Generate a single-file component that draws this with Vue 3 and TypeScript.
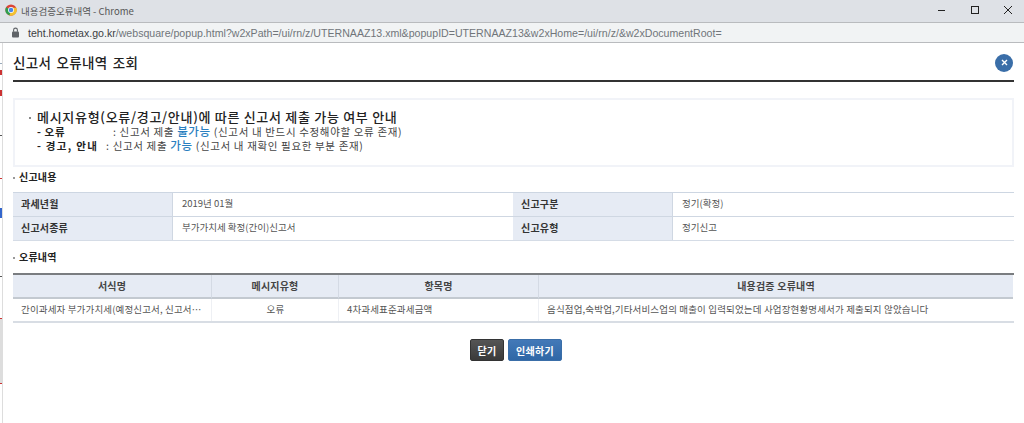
<script setup lang="ts">
const infoRows = [
  [
    { label: '과세년월', value: '2019년 01월' },
    { label: '신고구분', value: '정기(확정)' },
  ],
  [
    { label: '신고서종류', value: '부가가치세 확정(간이)신고서' },
    { label: '신고유형', value: '정기신고' },
  ],
]
const headers = ['서식명', '메시지유형', '항목명', '내용검증 오류내역']
</script>

<template>
  <div class="window">
    <header class="titlebar">
      <svg class="chrome" width="12" height="12" viewBox="0 0 16 16">
        <circle cx="8" cy="8" r="7.5" fill="#db4437" />
        <path d="M8 8 L1.5 4.2 A7.5 7.5 0 0 0 6.2 15.3 Z" fill="#2f9e4f" />
        <path d="M8 8 L6 15.4 A7.5 7.5 0 0 0 15 5 L8 5 Z" fill="#f2c230" />
        <circle cx="8" cy="8" r="3.9" fill="#fff" />
        <circle cx="8" cy="8" r="3" fill="#4a86e8" />
      </svg>
      <span class="wintitle">내용검증오류내역 - Chrome</span>
      <div class="winctl">
        <svg width="10" height="10" viewBox="0 0 10 10"><path d="M1 5.5H8" stroke="#222" stroke-width="1" /></svg>
        <svg width="10" height="10" viewBox="0 0 10 10"><rect x="1.5" y="1.5" width="7" height="7" fill="none" stroke="#222" stroke-width="1" /></svg>
        <svg width="10" height="10" viewBox="0 0 10 10"><path d="M1 1L9 9M9 1L1 9" stroke="#222" stroke-width="1" /></svg>
      </div>
    </header>
    <div class="addressbar">
      <svg width="9" height="11" viewBox="0 0 9 11">
        <rect x="1" y="4.5" width="7" height="6" rx="1" fill="#5f6368" />
        <path d="M2.6 4.8V3a1.9 1.9 0 0 1 3.8 0v1.8" fill="none" stroke="#5f6368" stroke-width="1.1" />
      </svg>
      <span class="url"><b>teht.hometax.go.kr</b>/websquare/popup.html?w2xPath=/ui/rn/z/UTERNAAZ13.xml&amp;popupID=UTERNAAZ13&amp;w2xHome=/ui/rn/z/&amp;w2xDocumentRoot=</span>
    </div>

    <div class="page">
      <div class="sliver"></div>
      <main class="popup">
        <div class="head">
          <h1>신고서 오류내역 조회</h1>
          <button class="close" aria-label="닫기">
            <svg width="7" height="7" viewBox="0 0 7 7"><path d="M1 1L6 6M6 1L1 6" stroke="#fff" stroke-width="1.4" /></svg>
          </button>
        </div>

        <section class="notice">
          <p class="n-title"><i class="dot"></i>메시지유형(오류/경고/안내)에 따른 신고서 제출 가능 여부 안내</p>
          <p class="n-line">
            <b class="n-key">- 오류</b><span class="n-sep">:</span>신고서 제출 <em>불가능</em> (신고서 내 반드시 수정해야할 오류 존재)
          </p>
          <p class="n-line">
            <b class="n-key second">- 경고, 안내</b><span class="n-sep second">:</span>신고서 제출 <em>가능</em> (신고서 내 재확인 필요한 부분 존재)
          </p>
        </section>

        <h2 class="sec first"><i class="dot small"></i>신고내용</h2>
        <div class="info">
          <template v-for="(row, r) in infoRows" :key="r">
            <template v-for="cell in row" :key="cell.label">
              <div class="lab">{{ cell.label }}</div>
              <div class="val">{{ cell.value }}</div>
            </template>
          </template>
        </div>

        <h2 class="sec second"><i class="dot small"></i>오류내역</h2>
        <div class="grid">
          <div v-for="h in headers" :key="h" class="gh">{{ h }}</div>
          <div class="gd ell">간이과세자 부가가치세(예정신고서, 신고서, 경정청구서)</div>
          <div class="gd center">오류</div>
          <div class="gd">4차과세표준과세금액</div>
          <div class="gd">음식점업,숙박업,기타서비스업의 매출이 입력되었는데 사업장현황명세서가 제출되지 않았습니다</div>
        </div>

        <div class="actions">
          <button class="btn dark">닫기</button>
          <button class="btn blue">인쇄하기</button>
        </div>
      </main>
    </div>
  </div>
</template>

<style>
html, body { margin: 0; background: #fff; overflow: hidden; }
</style>

<style scoped>
.window {
  width: 1024px;
  height: 423px;
  display: flex;
  flex-direction: column;
  font-family: "Noto Sans CJK KR", "Noto Sans", sans-serif;
  color: #333;
  overflow: hidden;
}
.titlebar {
  height: 22px;
  flex: none;
  background: #dee1e6;
  border-bottom: 1px solid #b9bbbe;
  display: flex;
  align-items: center;
  padding-left: 5px;
}
.chrome { margin-right: 4px; margin-top: -2px; }
.wintitle { font-size: 9.5px; color: #555; margin-top: -1px; }
.winctl { margin-left: auto; display: flex; gap: 23px; padding-right: 11px; margin-top: -2px; }
.addressbar {
  height: 19px;
  flex: none;
  background: #f1f3f4;
  border-bottom: 1px solid #b9bbbe;
  display: flex;
  align-items: center;
  gap: 8px;
  padding-left: 11px;
}
.url { font-family: "Liberation Sans", sans-serif; font-size: 10.6px; color: #70757a; white-space: nowrap; }
.url b { font-weight: 400; color: #3c4043; }
.page { flex: 1; display: flex; min-height: 0; }
.sliver {
  width: 2px;
  flex: none;
  background: linear-gradient(to bottom,
    #fff 0, #fff 20px, #9ab 20px, #9ab 21px, #fff 21px,
    #fff 27px, #c33 27px, #c33 32px, #fff 32px,
    #fff 47px, #c33 47px, #c33 53px, #fff 53px,
    #fff 92px, #555 92px, #555 93px, #fff 93px,
    #fff 135px, #c33 135px, #c33 136px, #fff 136px,
    #fff 165px, #36c 165px, #36c 175px, #fff 175px,
    #fff 233px, #555 233px, #555 234px, #fff 234px,
    #fff 275px, #c33 275px, #c33 276px, #ddd 276px,
    #ddd 340px, #c33 340px, #c33 341px, #fff 341px);
  border-right: 1px solid #ddd;
}
.popup { width: 1001px; margin-left: 10px; display: flex; flex-direction: column; }
.head {
  height: 37px;
  border-bottom: 2px solid #333;
  display: flex;
  align-items: center;
  justify-content: space-between;
  flex: none;
}
h1 { margin: 0; font-size: 13.5px; font-weight: 500; color: #222; letter-spacing: .3px; word-spacing: 2px; line-height: 1; position: relative; top: 1px; }
.close {
  width: 18px;
  height: 18px;
  padding: 0;
  border: 0;
  border-radius: 50%;
  background: #3a6ea8;
  display: flex;
  align-items: center;
  justify-content: center;
  margin-right: 1px;
  position: relative;
  top: 1px;
}
.notice {
  margin-top: 16px;
  height: 69px;
  box-sizing: border-box;
  border: 2px solid #f1f3f8;
  padding: 9px 14px 0;
  flex: none;
}
.notice p { margin: 0; white-space: nowrap; }
.n-title { font-size: 13px; font-weight: 500; color: #222; line-height: 16px; letter-spacing: .7px; }
.dot { display: inline-block; width: 2px; height: 2px; background: #888; margin-right: 6px; vertical-align: middle; }
.dot.small { background: #999; margin-right: 4px; }
.n-line { font-size: 10.5px; line-height: 14px; color: #444; letter-spacing: .65px; padding-left: 8px; }
.n-key { display: inline-block; color: #222; font-weight: 700; line-height: 14px; }
.n-key:not(.second) { width: 76px; }
.n-sep { margin-right: 3px; }
.n-key.second { letter-spacing: 1.3px; margin-right: 8px; }
.n-line em { font-style: normal; color: #2a7fc0; font-weight: 500; font-size: 11.5px; line-height: 1; }
h2.sec { margin: 0; font-size: 10px; font-weight: 700; color: #222; line-height: 14px; flex: none; letter-spacing: .2px; }
h2.first { margin-top: 3px; }
h2.second { margin-top: 9px; }
.info {
  margin-top: 8px;
  display: grid;
  grid-template-columns: 160px 340px 160px 341px;
  grid-auto-rows: 23.5px;
  border-top: 1px solid #cdd6e2;
  border-bottom: 1px solid #d5dce6;
  flex: none;
}
.lab, .val { display: flex; align-items: center; font-size: 9.5px; border-bottom: 1px solid #cfd7e2; box-sizing: border-box; padding-bottom: 2px; }
.info > :nth-last-child(-n+4) { border-bottom: 0; }
.lab { background: #e6ebf4; font-size: 10px; font-weight: 700; padding-left: 8px; color: #333; border-right: 1px solid #cfd7e2; letter-spacing: .2px; }
.val { padding-left: 9px; color: #555; }
.grid {
  margin-top: 9px;
  display: grid;
  grid-template-columns: 199px 127px 200px 474px;
  border-top: 2px solid #7a7d80;
  border-bottom: 2px solid #d8dde4;
  flex: none;
}
.gh {
  height: 24px;
  box-sizing: border-box;
  background: #e6ebf4;
  border-bottom: 2px solid #c3c9d0;
  border-right: 1px solid #d4dae4;
  display: flex;
  align-items: center;
  justify-content: center;
  font-size: 10px;
  font-weight: 700;
  color: #444;
  letter-spacing: .2px;
  padding-bottom: 2px;
}
.gh:nth-child(4) { border-right: 0; }
.gd {
  height: 22px;
  line-height: 21px;
  font-size: 9.5px;
  color: #555;
  padding: 0 7px 0 8px;
  border-right: 1px solid #eef0f4;
  white-space: nowrap;
  letter-spacing: .15px;
  min-width: 0;
}
.gd:last-child { border-right: 0; }
.ell { overflow: hidden; text-overflow: ellipsis; }
.center { text-align: center; }
.actions { margin-top: 16px; display: flex; justify-content: center; gap: 4px; padding-left: 5px; flex: none; }
.btn {
  height: 22px;
  padding: 0;
  border-radius: 2px;
  color: #fff;
  font-family: inherit;
  font-size: 10px;
  font-weight: 700;
  letter-spacing: .3px;
}
.dark { width: 34px; background: linear-gradient(#555, #3a3a3a); border: 1px solid #333; }
.blue { width: 54px; background: linear-gradient(#4379b8, #2f67a6); border: 1px solid #3a6ea8; }
</style>
